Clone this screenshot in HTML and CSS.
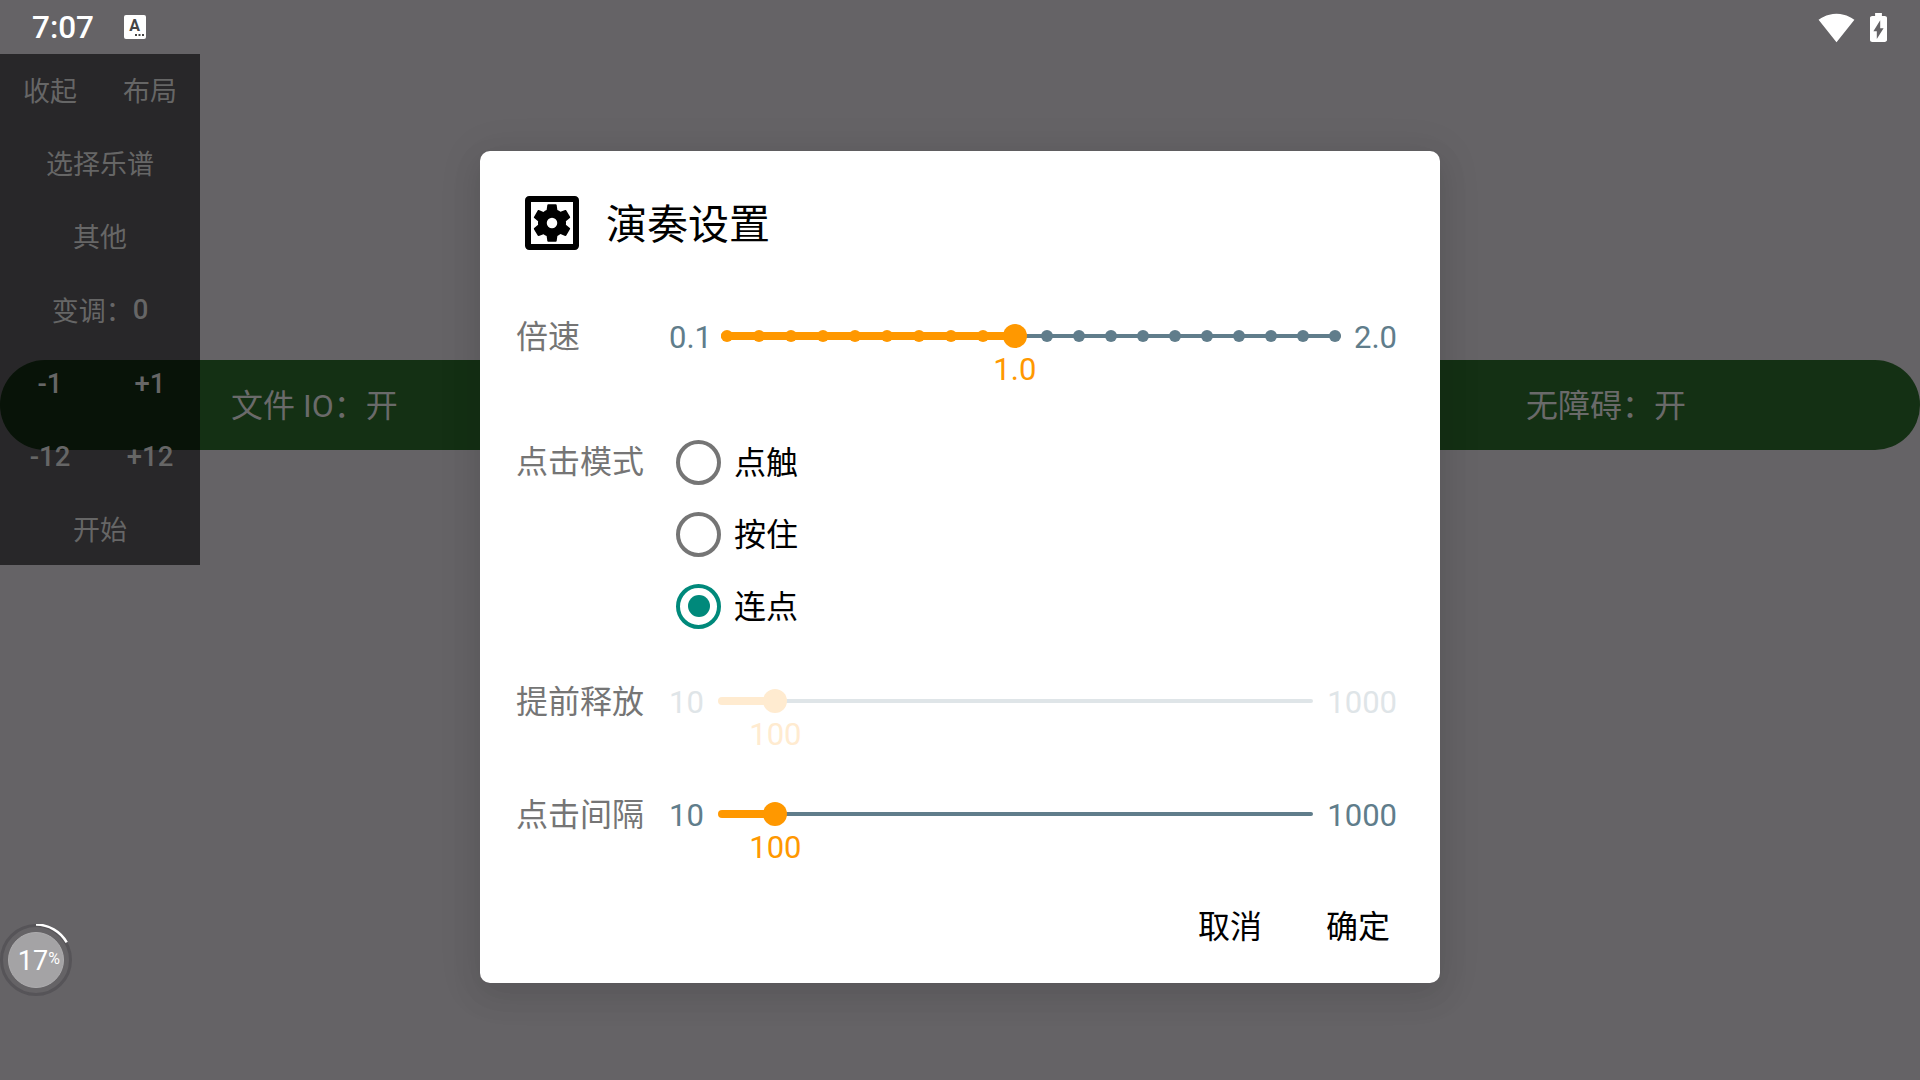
FILE: index.html
```html
<!DOCTYPE html>
<html lang="zh-CN">
<head>
    <meta charset="UTF-8">
    <meta name="viewport" content="width=device-width, initial-scale=1.0">
    <title>演奏设置</title>
    <link rel="stylesheet" href="styles.css">
</head>

<body>
    <div class="status-bar">
        <span class="clock">7:07</span>
        <svg class="ime-icon" width="22" height="24" viewBox="0 0 22 24">
            <rect width="22" height="24" rx="2" fill="#fff"/>
            <text x="10.5" y="16" text-anchor="middle" class="ime-letter">A</text>
            <rect x="11" y="19" width="2" height="2" fill="#444"/>
            <rect x="14.5" y="19" width="2" height="2" fill="#444"/>
            <rect x="18" y="19" width="2" height="2" fill="#444"/>
        </svg>
        <div class="status-right">
            <svg width="37" height="37" viewBox="0 0 24 24">
                <path fill="#fff" d="M12.01 21.49L23.64 7c-.45-.34-4.93-4-11.64-4C5.28 3 .81 6.66.36 7l11.63 14.49.01.01.01-.01z"/>
            </svg>
            <svg width="17" height="29" viewBox="7 2 10 20" preserveAspectRatio="none">
                <path fill="#fff" fill-rule="evenodd" d="M15.67 4H14V2h-4v2H8.33C7.6 4 7 4.6 7 5.33v15.33C7 21.4 7.6 22 8.33 22h7.33c.74 0 1.34-.6 1.34-1.33V5.33C17 4.6 16.4 4 15.67 4zM11 20v-5.5H9L13 7v5.5h2L11 20z"/>
            </svg>
        </div>
    </div>

    <div class="key-bar">
        <span>文件 IO：开</span>
        <span>无障碍：开</span>
    </div>

    <div class="side-panel">
        <div class="side-row side-pair"><span>收起</span><span>布局</span></div>
        <div class="side-row">选择乐谱</div>
        <div class="side-row">其他</div>
        <div class="side-row side-mixed">变调：<span class="num">0</span></div>
        <div class="side-row side-pair side-nums"><span class="num">-1</span><span class="num">+1</span></div>
        <div class="side-row side-pair side-nums"><span class="num">-12</span><span class="num">+12</span></div>
        <div class="side-row side-mixed">开始</div>
    </div>

    <svg class="progress" width="72" height="72" viewBox="0 0 72 72">
        <circle cx="36" cy="36" r="34.5" fill="none" stroke="#565458" stroke-width="3"/>
        <circle cx="36" cy="36" r="27.5" fill="#a4a3a5" stroke="#aeadaf" stroke-width="1"/>
        <path d="M36 0.6A35.4 35.4 0 0 1 66.7 18.3" fill="none" stroke="#fff" stroke-width="2.5"/>
        <text x="33" y="46" text-anchor="middle" class="progress-num">17</text>
        <text x="54" y="40" text-anchor="middle" class="progress-unit">%</text>
    </svg>

    <div class="scrim">
        <div class="dialog">
            <div class="dialog-title">
                <svg width="72" height="72" viewBox="0 0 24 24" class="title-icon">
                    <rect x="4" y="4" width="16" height="16" rx="0.4" fill="none" stroke="#000" stroke-width="2"/>
                    <g transform="translate(12 12) scale(0.89) translate(-12 -12)">
                        <path d="M17.25 12c0 .23-.02.46-.05.68l1.48 1.16c.13.11.17.3.08.45l-1.4 2.42c-.09.15-.27.21-.43.15l-1.74-.7c-.36.28-.76.51-1.18.69l-.26 1.85c-.03.17-.18.3-.35.3h-2.8c-.17 0-.32-.13-.35-.29l-.26-1.85c-.43-.18-.82-.41-1.18-.69l-1.74.7c-.16.06-.34 0-.43-.15l-1.4-2.42c-.09-.15-.05-.34.08-.45l1.48-1.16c-.03-.23-.05-.46-.05-.69 0-.23.02-.46.05-.68l-1.48-1.16c-.13-.11-.17-.3-.08-.45l1.4-2.42c.09-.15.27-.21.43-.15l1.74.7c.36-.28.76-.51 1.18-.69l.26-1.85c.03-.17.18-.3.35-.3h2.8c.17 0 .32.13.35.29l.26 1.85c.43.18.82.41 1.18.69l1.74-.7c.16-.06.34 0 .43.15l1.4 2.42c.09.15.05.34-.08.45l-1.48 1.16c.03.23.05.46.05.69z"/>
                    </g>
                    <circle cx="12" cy="12" r="1.75" fill="#fff"/>
                </svg>
                <h1>演奏设置</h1>
            </div>

            <div class="row speed-row">
                <span class="row-label">倍速</span>
                <span class="limit">0.1</span>
                <div class="slider stepped">
                    <div class="fill" style="width: 47.4%"></div>
                    <div class="rest"></div>
                    <div class="ticks" id="speedTicks"></div>
                    <div class="thumb" style="left: 47.4%"></div>
                    <span class="value" style="left: 47.4%">1.0</span>
                </div>
                <span class="limit">2.0</span>
            </div>

            <div class="mode-row">
                <span class="row-label">点击模式</span>
                <div class="radio-list">
                    <div class="radio"><span class="ring"></span><span class="radio-text">点触</span></div>
                    <div class="radio"><span class="ring"></span><span class="radio-text">按住</span></div>
                    <div class="radio"><span class="ring checked"></span><span class="radio-text">连点</span></div>
                </div>
            </div>

            <div class="row release-row disabled">
                <span class="row-label">提前释放</span>
                <span class="limit">10</span>
                <div class="slider plain">
                    <div class="fill" style="width: 9.66%"></div>
                    <div class="rest"></div>
                    <div class="thumb" style="left: 9.66%"></div>
                    <span class="value" style="left: 9.66%">100</span>
                </div>
                <span class="limit">1000</span>
            </div>

            <div class="row interval-row">
                <span class="row-label">点击间隔</span>
                <span class="limit">10</span>
                <div class="slider plain">
                    <div class="fill" style="width: 9.66%"></div>
                    <div class="rest"></div>
                    <div class="thumb" style="left: 9.66%"></div>
                    <span class="value" style="left: 9.66%">100</span>
                </div>
                <span class="limit">1000</span>
            </div>

            <div class="actions">
                <button>取消</button>
                <button>确定</button>
            </div>
        </div>
    </div>

    <script>
        // 20 steps from 0.1 to 2.0, the thumb sits on 1.0
        const speedTicks = document.getElementById('speedTicks');
        for (let i = 0; i < 20; i++) {
            const tick = document.createElement('span');
            tick.classList.add('tick');
            if (i < 10) tick.classList.add('on');
            speedTicks.appendChild(tick);
        }
    </script>
</body>
</html>
```

FILE: styles.css
```css
* {
    box-sizing: border-box;
}

body {
    position: relative;
    width: 1920px;
    height: 1080px;
    margin: 0;
    overflow: hidden;
    background-color: #656366;
    font-family: Roboto, "Noto Sans CJK SC", sans-serif;
}

.status-bar {
    display: flex;
    align-items: center;
    height: 54px;
    padding: 0 33px 0 32px;
}

.clock {
    color: #fff;
    font-size: 31.5px;
    font-weight: 500;
}

.ime-icon {
    margin-left: 30px;
}

.ime-letter {
    font-size: 16px;
    font-weight: 700;
    fill: #444;
}

.status-right {
    display: flex;
    align-items: center;
    gap: 15px;
    margin-left: auto;
}

/* floating key overlay */
.key-bar {
    position: absolute;
    top: 360px;
    left: 0;
    right: 0;
    display: flex;
    justify-content: space-between;
    align-items: center;
    height: 90px;
    padding: 0 234px 5px 231px;
    border-radius: 45px;
    background-color: #143014;
    color: #6a6a6a;
    font-size: 32px;
}

.side-panel {
    position: absolute;
    top: 54px;
    left: 0;
    display: grid;
    grid-auto-rows: 73px;
    width: 200px;
    background-color: rgba(0, 0, 0, 0.6);
    color: #666;
    font-size: 27px;
}

.side-row {
    display: flex;
    justify-content: center;
    align-items: center;
    padding-bottom: 2px;
}

.side-mixed {
    padding-bottom: 0;
}

.side-nums {
    padding: 2px 0 0;
}

.side-pair {
    display: grid;
    grid-template-columns: 1fr 1fr;
    justify-items: center;
}

.num {
    font-size: 27.5px;
    font-weight: 500;
}

.progress {
    position: absolute;
    top: 924px;
    left: 0;
}

.progress-num {
    fill: #fff;
    font-size: 27px;
}

.progress-unit {
    fill: #fff;
    font-size: 16px;
}

.scrim {
    position: absolute;
    inset: 0;
    display: flex;
    justify-content: center;
    padding-top: 151px;
}

.dialog {
    display: flex;
    flex-direction: column;
    width: 960px;
    height: 832px;
    padding-top: 45px;
    border-radius: 10px;
    background-color: #fff;
    box-shadow: 0 12px 30px 3px rgba(0, 0, 0, 0.07), 0 5px 40px 8px rgba(0, 0, 0, 0.06);
}

.dialog-title {
    display: flex;
    align-items: center;
    gap: 27px;
    height: 54px;
    padding-left: 45px;
}

.title-icon {
    flex: none;
    margin: -9px;
}

.dialog-title h1 {
    margin: 0;
    padding-bottom: 5px;
    color: #000;
    font-size: 41px;
    font-weight: 400;
}

.row {
    display: flex;
    align-items: center;
    gap: 11px;
    height: 48px;
    padding: 0 43px 0 36px;
}

.speed-row {
    margin-top: 62px;
}

.release-row {
    margin-top: 35px;
}

.interval-row {
    margin-top: 65px;
}

.row-label {
    flex: none;
    width: 126px;
    padding-bottom: 5px;
    color: #757575;
    font-size: 32px;
    white-space: nowrap;
}

.limit {
    padding-top: 2px;
    color: #607d8b;
    font-size: 31px;
}

.row-label + .limit {
    margin-left: 16px;
}

.slider {
    position: relative;
    display: flex;
    align-items: center;
    flex: 1;
    height: 24px;
}

.slider.plain {
    margin: 0 3px 0 3px;
}

.slider.stepped {
    margin: 0 2px 0 -2px;
}

.fill {
    flex: none;
    height: 8px;
    border-radius: 4px 0 0 4px;
    background-color: #ff9800;
}

.rest {
    flex: 1;
    height: 4.5px;
    border-radius: 0 3px 3px 0;
    background-color: #607d8b;
}

.ticks {
    position: absolute;
    left: 0;
    right: 0;
    display: flex;
    justify-content: space-between;
}

.tick {
    width: 12px;
    height: 12px;
    border-radius: 50%;
    background-color: #607d8b;
}

.tick.on {
    background-color: #ff9800;
}

.thumb {
    position: absolute;
    top: 0;
    width: 24px;
    height: 24px;
    margin-left: -12px;
    border-radius: 50%;
    background-color: #ff9800;
}

.value {
    position: absolute;
    top: 30px;
    transform: translateX(-50%);
    color: #ff9800;
    font-size: 31px;
    line-height: 32px;
}

.disabled .limit {
    color: #dfe5e8;
}

.disabled .fill,
.disabled .thumb {
    background-color: #ffebd0;
}

.disabled .rest {
    background-color: #dfe5e8;
}

.disabled .value {
    color: #ffebd0;
}

.mode-row {
    display: flex;
    gap: 34px;
    margin-top: 66px;
    padding-left: 36px;
}

.mode-row .row-label {
    padding-bottom: 0;
    line-height: 72px;
}

.radio {
    display: flex;
    align-items: center;
    gap: 13px;
    height: 72px;
    color: #000;
    font-size: 32px;
}

.radio-text {
    padding-bottom: 5px;
}

.ring {
    display: flex;
    justify-content: center;
    align-items: center;
    width: 45px;
    height: 45px;
    border: 4.5px solid #757575;
    border-radius: 50%;
}

.ring.checked {
    border-color: #00897b;
}

.ring.checked::after {
    content: "";
    width: 22px;
    height: 22px;
    border-radius: 50%;
    background-color: #00897b;
}

.actions {
    display: flex;
    justify-content: flex-end;
    gap: 64px;
    height: 60px;
    margin-top: 59px;
    padding-right: 50px;
}

.actions button {
    padding: 0 0 6px;
    border: none;
    background: none;
    color: #000;
    font-family: inherit;
    font-size: 32px;
}
```
